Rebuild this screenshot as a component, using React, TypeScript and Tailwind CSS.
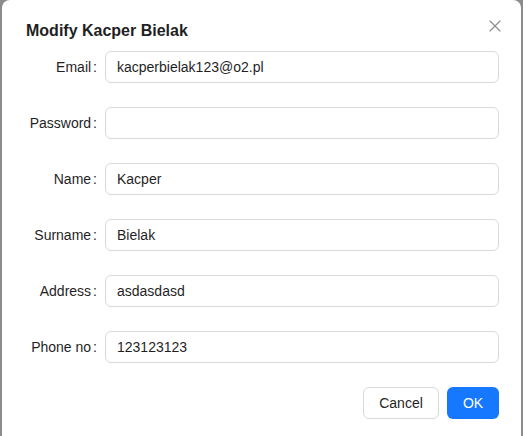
import { X } from 'lucide-react'

const fields = [
  { label: 'Email', value: 'kacperbielak123@o2.pl' },
  { label: 'Password', value: '' },
  { label: 'Name', value: 'Kacper' },
  { label: 'Surname', value: 'Bielak' },
  { label: 'Address', value: 'asdasdasd' },
  { label: 'Phone no', value: '123123123' },
]

function FormRow({ label, value }: { label: string; value: string }) {
  return (
    <div className="flex items-center mb-6">
      <label className="w-[79px] shrink-0 text-right pr-2 text-[14px] text-[#1f1f1f] whitespace-nowrap">
        {label}
        <span className="ml-[2px]">:</span>
      </label>
      <input
        type={label === 'Password' ? 'password' : 'text'}
        defaultValue={value}
        className="flex-1 h-8 rounded-[6px] border border-[#d9d9d9] bg-white px-[11px] text-[14px] text-[#1f1f1f] outline-none"
      />
    </div>
  )
}

export default function App() {
  return (
    <div
      className="w-[523px] h-[436px] overflow-hidden bg-[#8c8c8c] px-[2px]"
      style={{ fontFamily: '"Liberation Sans", Arial, sans-serif' }}
    >
      <div className="relative h-[460px] bg-white rounded-t-[8px] pl-6 pr-[22px] pt-[19px]">
        <div className="text-[16px] leading-6 font-bold text-[#1f1f1f] mb-[8px]">
          Modify Kacper Bielak
        </div>
        <button className="absolute top-[15px] right-[15px] w-[22px] h-[22px] flex items-center justify-center text-[#8c8c8c]">
          <X size={20} strokeWidth={1.4} />
        </button>
        <form>
          {fields.map((f) => (
            <FormRow key={f.label} label={f.label} value={f.value} />
          ))}
        </form>
        <div className="flex justify-end gap-2">
          <button className="h-8 w-[76px] rounded-[6px] border border-[#d9d9d9] bg-white text-[14px] text-[#1f1f1f]">
            Cancel
          </button>
          <button className="h-8 w-[52px] rounded-[6px] bg-[#1677ff] text-[14px] text-white">
            OK
          </button>
        </div>
      </div>
    </div>
  )
}
